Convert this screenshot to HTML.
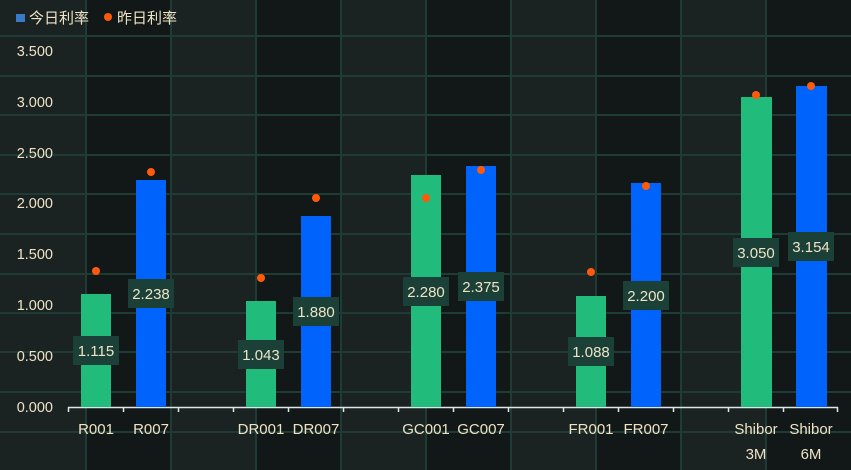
<!DOCTYPE html>
<html><head><meta charset="utf-8"><style>
html,body{margin:0;padding:0;background:#121817;width:851px;height:470px;overflow:hidden}
svg{display:block;font-family:"Liberation Sans","Noto Sans CJK SC",sans-serif}
</style></head><body>
<svg width="851" height="470" viewBox="0 0 851 470" xmlns="http://www.w3.org/2000/svg">
<rect width="851" height="470" fill="#121817"/>
<g fill="#1a2321">
<rect x="0" y="0" width="86" height="470"/>
<rect x="171" y="0" width="85" height="470"/>
<rect x="341" y="0" width="85" height="470"/>
<rect x="511" y="0" width="85" height="470"/>
<rect x="681" y="0" width="85" height="470"/>
</g>
<g stroke="#1f3b35" stroke-width="2">
<line x1="86" y1="0" x2="86" y2="470"/><line x1="171" y1="0" x2="171" y2="470"/>
<line x1="256" y1="0" x2="256" y2="470"/><line x1="341" y1="0" x2="341" y2="470"/>
<line x1="426" y1="0" x2="426" y2="470"/><line x1="511" y1="0" x2="511" y2="470"/>
<line x1="596" y1="0" x2="596" y2="470"/><line x1="681" y1="0" x2="681" y2="470"/>
<line x1="766" y1="0" x2="766" y2="470"/>
<line x1="0" y1="36" x2="851" y2="36"/><line x1="0" y1="76" x2="851" y2="76"/>
<line x1="0" y1="115" x2="851" y2="115"/><line x1="0" y1="155" x2="851" y2="155"/>
<line x1="0" y1="194" x2="851" y2="194"/><line x1="0" y1="234" x2="851" y2="234"/>
<line x1="0" y1="274" x2="851" y2="274"/><line x1="0" y1="313" x2="851" y2="313"/>
<line x1="0" y1="352" x2="851" y2="352"/><line x1="0" y1="392" x2="851" y2="392"/>
<line x1="0" y1="432" x2="851" y2="432"/>
</g>
<rect x="16" y="14" width="9" height="8" fill="#3a78c8"/>
<text x="29" y="23" font-size="15" fill="#efe3c6">今日利率</text>
<circle cx="108" cy="17" r="4" fill="#ff5a0a"/>
<text x="117" y="23" font-size="15" fill="#efe3c6">昨日利率</text>
<g font-size="14.5" fill="#efe3c6" text-anchor="end">
<text x="53" y="56">3.500</text><text x="53" y="107">3.000</text>
<text x="53" y="158">2.500</text><text x="53" y="208">2.000</text>
<text x="53" y="259">1.500</text><text x="53" y="310">1.000</text>
<text x="53" y="361">0.500</text><text x="53" y="412">0.000</text>
</g>
<g stroke="#dfe6ea" stroke-width="1.5">
<line x1="68" y1="407.5" x2="838" y2="407.5"/>
<line x1="68.5" y1="407" x2="68.5" y2="412"/><line x1="123.5" y1="407" x2="123.5" y2="412"/>
<line x1="178.5" y1="407" x2="178.5" y2="412"/><line x1="233.5" y1="407" x2="233.5" y2="412"/>
<line x1="288.5" y1="407" x2="288.5" y2="412"/><line x1="343.5" y1="407" x2="343.5" y2="412"/>
<line x1="398.5" y1="407" x2="398.5" y2="412"/><line x1="453.5" y1="407" x2="453.5" y2="412"/>
<line x1="508.5" y1="407" x2="508.5" y2="412"/><line x1="563.5" y1="407" x2="563.5" y2="412"/>
<line x1="618.5" y1="407" x2="618.5" y2="412"/><line x1="673.5" y1="407" x2="673.5" y2="412"/>
<line x1="728.5" y1="407" x2="728.5" y2="412"/><line x1="783.5" y1="407" x2="783.5" y2="412"/>
<line x1="837.5" y1="407" x2="837.5" y2="412"/>
</g>
<g>
<rect x="81" y="294" width="30" height="113" fill="#21bb7b"/>
<rect x="136" y="180" width="30" height="227" fill="#0064fc"/>
<rect x="246" y="301" width="30" height="106" fill="#21bb7b"/>
<rect x="301" y="216" width="30" height="191" fill="#0064fc"/>
<rect x="411" y="175" width="30" height="232" fill="#21bb7b"/>
<rect x="466" y="166" width="30" height="241" fill="#0064fc"/>
<rect x="576" y="296" width="30" height="111" fill="#21bb7b"/>
<rect x="631" y="183" width="30" height="224" fill="#0064fc"/>
<rect x="741" y="97" width="31" height="310" fill="#21bb7b"/>
<rect x="796" y="86" width="31" height="321" fill="#0064fc"/>
</g>
<g fill="#1a4038">
<rect x="73" y="336" width="46" height="29"/>
<rect x="128" y="279" width="46" height="29"/>
<rect x="238" y="340" width="46" height="29"/>
<rect x="293" y="297" width="46" height="29"/>
<rect x="403" y="277" width="46" height="29"/>
<rect x="458" y="272" width="46" height="29"/>
<rect x="568" y="337" width="46" height="29"/>
<rect x="623" y="281" width="46" height="29"/>
<rect x="733" y="238" width="46" height="29"/>
<rect x="788" y="232" width="46" height="29"/>
</g>
<g font-size="15" fill="#efe3c6" text-anchor="middle">
<text x="96" y="356">1.115</text><text x="151" y="299">2.238</text>
<text x="261" y="360">1.043</text><text x="316" y="317">1.880</text>
<text x="426" y="297">2.280</text><text x="481" y="292">2.375</text>
<text x="591" y="357">1.088</text><text x="646" y="301">2.200</text>
<text x="756" y="258">3.050</text><text x="811" y="252">3.154</text>
</g>
<g fill="#ff5a0a">
<circle cx="96" cy="271" r="4"/><circle cx="151" cy="172" r="4"/>
<circle cx="261" cy="278" r="4"/><circle cx="316" cy="198" r="4"/>
<circle cx="426" cy="198" r="4"/><circle cx="481" cy="170" r="4"/>
<circle cx="591" cy="272" r="4"/><circle cx="646" cy="186" r="4"/>
<circle cx="756" cy="95" r="4"/><circle cx="811" cy="86" r="4"/>
</g>
<g font-size="15" fill="#efe3c6" text-anchor="middle">
<text x="96" y="434">R001</text><text x="151" y="434">R007</text>
<text x="261" y="434">DR001</text><text x="316" y="434">DR007</text>
<text x="426" y="434">GC001</text><text x="481" y="434">GC007</text>
<text x="591" y="434">FR001</text><text x="646" y="434">FR007</text>
<text x="756" y="434">Shibor</text><text x="756" y="459">3M</text>
<text x="811" y="434">Shibor</text><text x="811" y="459">6M</text>
</g>
</svg>
</body></html>
